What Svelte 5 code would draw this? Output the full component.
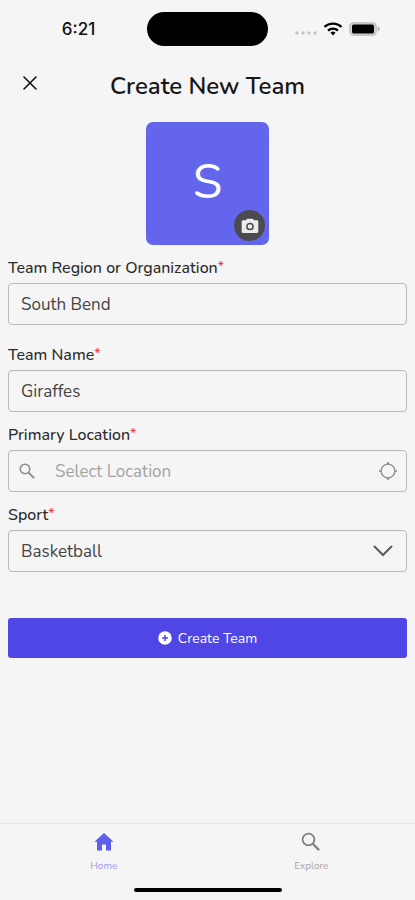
<script lang="ts">
  let region = $state('South Bend');
  let teamName = $state('Giraffes');
  let location = $state('');
  let sport = $state('Basketball');

  let initial = $derived(region.charAt(0).toUpperCase());

  const sports = ['Basketball', 'Baseball', 'Football', 'Soccer', 'Volleyball'];
</script>

<div class="screen">
  <div class="status">
    <span class="time">6:21</span>
    <span class="island"></span>
    <div class="indicators">
      <svg width="22" height="6" viewBox="0 0 22 6" fill="#c4c4c4" aria-hidden="true">
        <circle cx="2" cy="3" r="1.7" />
        <circle cx="8" cy="3" r="1.7" />
        <circle cx="14" cy="3" r="1.7" />
        <circle cx="20" cy="3" r="1.7" />
      </svg>
      <svg width="20" height="14" viewBox="0 0 20 14" fill="none" stroke="#000" stroke-width="2.2" aria-hidden="true">
        <path d="M1.5 5a12.2 12.2 0 0 1 17 0" />
        <path d="M5 8.6a7.2 7.2 0 0 1 10 0" />
        <path d="M10 13.4l-2.5-2.6a3.6 3.6 0 0 1 5 0z" fill="#000" stroke="none" />
      </svg>
      <svg width="32" height="14" viewBox="0 0 32 14" aria-hidden="true">
        <rect x="0.8" y="0.8" width="26.4" height="12.4" rx="3.6" fill="#d4d4d4" stroke="#bcbcbc" stroke-width="1.2" />
        <rect x="3" y="2.6" width="22" height="8.8" rx="1.6" />
        <path d="M28.6 4.6c1.6.5 2.2 1.3 2.2 2.4s-.6 1.9-2.2 2.4z" fill="#b4b4b4" />
      </svg>
    </div>
  </div>

  <header>
    <button class="close" type="button" aria-label="Close">
      <svg width="14" height="14" viewBox="0 0 14 14" fill="none" stroke="#111" stroke-width="1.6" stroke-linecap="round">
        <path d="M1 1l12 12M13 1L1 13" />
      </svg>
    </button>
    <h1>Create New Team</h1>
  </header>

  <main>
    <div class="avatar">
      <span>{initial}</span>
      <button class="camera" type="button" aria-label="Change photo">
        <svg width="18" height="16" viewBox="0 0 18 16">
          <path fill="#ececec" d="M6.2.8h5.6l1.3 1.400h2.700c.9 0 1.500.6 1.500 1.500v9.800c0 .9-.6 1.500-1.500 1.500H2.200c-.9 0-1.500-.6-1.500-1.500V3.700c0-.9.6-1.500 1.500-1.500h2.700z" />
          <circle cx="9" cy="8.500" r="3.100" fill="none" stroke="#4b4b4f" stroke-width="1.500" />
        </svg>
      </button>
    </div>

    <form onsubmit={(e) => e.preventDefault()}>
      <div class="field wide">
        <label for="region">Team Region or Organization<sup>*</sup></label>
        <input id="region" class="box" type="text" bind:value={region} />
      </div>

      <div class="field">
        <label for="name">Team Name<sup>*</sup></label>
        <input id="name" class="box" type="text" bind:value={teamName} />
      </div>

      <div class="field">
        <label for="location">Primary Location<sup>*</sup></label>
        <div class="box search">
          <svg width="18" height="18" viewBox="0 0 16 16" fill="none" stroke="#8c8c8c" stroke-width="1.4" aria-hidden="true">
            <circle cx="6.2" cy="6.2" r="4.2" />
            <path d="M9.300 9.300l5 5" stroke-width="1.700" />
          </svg>
          <input id="location" type="text" placeholder="Select Location" bind:value={location} />
          <button type="button" aria-label="Use current location">
            <svg width="18" height="18" viewBox="0 0 18 18" fill="none" stroke="#8c8c8c" stroke-width="1.400">
              <circle cx="9" cy="9" r="6.900" />
              <path d="M9 .3v2M9 15.700v2M.3 9h2M15.700 9h2" stroke-width="2.200" />
            </svg>
          </button>
        </div>
      </div>

      <div class="field">
        <label for="sport">Sport<sup>*</sup></label>
        <div class="select">
          <select id="sport" class="box" bind:value={sport}>
            {#each sports as name (name)}
              <option value={name}>{name}</option>
            {/each}
          </select>
          <svg width="20" height="12" viewBox="0 0 20 12" fill="none" stroke="#5a5a5a" stroke-width="2" stroke-linecap="round" aria-hidden="true">
            <path d="M1.500 1.500L10 10l8.500-8.500" />
          </svg>
        </div>
      </div>

      <button class="submit" type="submit">
        <svg width="14" height="14" viewBox="0 0 14 14" aria-hidden="true">
          <circle cx="7" cy="7" r="6.800" fill="#fff" />
          <path d="M7 4v6M4 7h6" stroke="#4f46e5" stroke-width="1.500" />
        </svg>
        Create Team
      </button>
    </form>
  </main>

  <nav>
    <a class="active" href="#home">
      <svg width="20" height="20" viewBox="0 0 20 20" fill="currentColor" aria-hidden="true">
        <path d="M10 1l9.500 8.800h-2.500V18.500h-5v-6H8v6H3V9.800H.5z" />
      </svg>
      <span>Home</span>
    </a>
    <a href="#explore">
      <svg width="20" height="20" viewBox="0 0 20 20" fill="none" stroke="#808080" stroke-width="1.800" aria-hidden="true">
        <circle cx="7.500" cy="7.500" r="5.900" />
        <path d="M11.800 11.800l6.300 6.300" stroke-width="2.300" />
      </svg>
      <span>Explore</span>
    </a>
  </nav>
  <div class="home-bar"></div>
</div>

<style>
  :global(body) {
    margin: 0;
    background: #f5f5f5;
  }
  .screen {
    display: flex;
    flex-direction: column;
    box-sizing: border-box;
    min-height: 100vh;
    padding-bottom: 8px;
    font-family: Nunito, Lato, sans-serif;
    color: #222;
  }
  button,
  input,
  select {
    font-family: inherit;
  }
  button {
    padding: 0;
    border: 0;
    background: none;
    cursor: pointer;
  }
  svg {
    display: block;
    flex: none;
  }

  .status {
    display: grid;
    grid-template-columns: 1fr auto 1fr;
    align-items: center;
    padding-top: 12px;
  }
  .time {
    padding-left: 10px;
    text-align: center;
    font: 500 17px/20px Inter, sans-serif;
    color: #111;
  }
  .island {
    width: 121px;
    height: 34px;
    border-radius: 17px;
    background: #000;
  }
  .indicators {
    display: flex;
    align-items: center;
    justify-content: flex-end;
    gap: 6px;
    padding-right: 34px;
  }
  .indicators svg:first-child {
    align-self: flex-end;
  }

  header {
    display: grid;
    grid-template-columns: 44px 1fr 44px;
    align-items: center;
    margin-top: 24px;
    padding: 0 8px;
  }
  .close {
    display: flex;
    justify-content: center;
    height: 20px;
  }
  h1 {
    margin: 0;
    text-align: center;
    font-size: 24px;
    line-height: 32px;
    font-weight: 600;
    color: #181818;
  }

  main {
    flex: 1;
    padding: 20px 8px;
  }
  .avatar {
    position: relative;
    display: flex;
    align-items: center;
    justify-content: center;
    width: 123px;
    height: 123px;
    margin: 0 auto 13px;
    border-radius: 7px;
    background: #6366ec;
    color: #fff;
    font-size: 48px;
    line-height: 60px;
  }
  .avatar span {
    padding-bottom: 3px;
  }
  .camera {
    position: absolute;
    right: 4px;
    bottom: 4px;
    display: flex;
    align-items: center;
    justify-content: center;
    width: 31px;
    height: 31px;
    border-radius: 50%;
    background: #4b4b4f;
  }

  .field {
    margin-bottom: 13px;
  }
  .wide {
    margin-bottom: 20px;
  }
  label {
    display: block;
    margin-bottom: 5px;
    font-size: 16px;
    line-height: 20px;
    font-weight: 500;
    color: #2c2c2c;
  }
  sup {
    font-size: 14px;
    line-height: 0;
    vertical-align: 2px;
    color: #ef4444;
  }
  .box {
    display: block;
    box-sizing: border-box;
    width: 100%;
    height: 42px;
    padding: 0 12px;
    border: 1px solid #b8b8b8;
    border-radius: 4px;
    background: transparent;
    font-size: 17px;
    color: #444;
  }
  .search {
    display: flex;
    align-items: center;
    padding: 0 9px;
  }
  .search input {
    flex: 1;
    min-width: 0;
    margin-left: 19px;
    padding: 0;
    border: 0;
    background: none;
    font-size: 17px;
    color: #444;
  }
  .search input::placeholder {
    color: #a3a3a3;
  }
  .select {
    position: relative;
  }
  .select select {
    appearance: none;
  }
  .select svg {
    position: absolute;
    top: 15px;
    right: 14px;
    pointer-events: none;
  }

  .submit {
    display: flex;
    align-items: center;
    justify-content: center;
    gap: 6px;
    width: 100%;
    height: 40px;
    margin-top: 46px;
    border-radius: 3px;
    background: #4f46e5;
    color: #fff;
    font-size: 14px;
  }

  nav {
    display: grid;
    grid-template-columns: 1fr 1fr;
    border-top: 1px solid #e6e6e6;
    padding: 8px 0 16px;
  }
  nav a {
    display: flex;
    flex-direction: column;
    align-items: center;
    gap: 8px;
    font-size: 10px;
    line-height: 12px;
    text-decoration: none;
    color: #a8a8a8;
  }
  nav .active {
    color: #5d5fec;
  }
  nav .active span {
    color: #9a9af0;
  }
  .home-bar {
    width: 148px;
    height: 4px;
    margin: 0 auto;
    border-radius: 2px;
    background: #000;
  }
</style>
